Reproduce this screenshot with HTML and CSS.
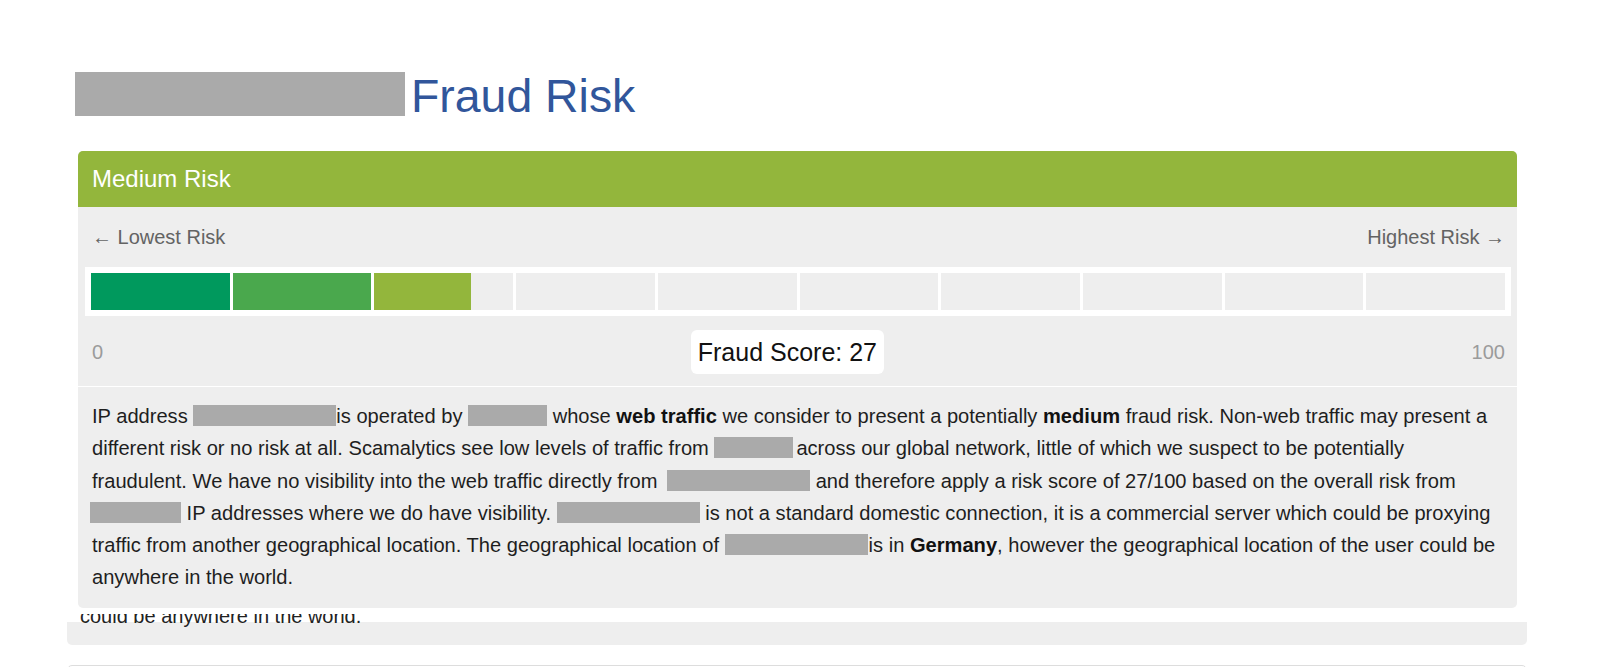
FILE: index.html
```html
<!DOCTYPE html>
<html lang="en">
<head>
<meta charset="utf-8">
<title>Fraud Risk</title>
<link rel="stylesheet" href="styles.css">
</head>
<body>
<div class="page">
  <section class="report">
    <h1 class="title"><span class="redact redact-title"></span>Fraud Risk</h1>
    <div class="panel">
      <div class="panel-head">Medium Risk</div>
      <div class="panel-body">
        <div class="labels">
          <span>&larr; Lowest Risk</span>
          <span>Highest Risk &rarr;</span>
        </div>
        <div class="bar">
          <div class="seg"><div class="fill fill-1" style="width:100%"></div></div>
          <div class="seg"><div class="fill fill-2" style="width:100%"></div></div>
          <div class="seg"><div class="fill fill-3" style="width:70%"></div></div>
          <div class="seg"></div>
          <div class="seg"></div>
          <div class="seg"></div>
          <div class="seg"></div>
          <div class="seg"></div>
          <div class="seg"></div>
          <div class="seg"></div>
        </div>
        <div class="scale">
          <span class="scale-num">0</span>
          <span class="score">Fraud Score: 27</span>
          <span class="scale-num">100</span>
        </div>
      </div>
      <div class="panel-text">
        <p>IP address <span class="redact r-ip"></span>is operated by <span class="redact r-isp"></span> whose <b>web traffic</b> we consider to present a potentially <b>medium</b> fraud risk. Non-web traffic may present a<br>different risk or no risk at all. Scamalytics see low levels of traffic from <span class="redact r-isp r-isp2"></span>across our global network, little of which we suspect to be potentially<br>fraudulent. We have no visibility into the web traffic directly from <span class="redact r-ip r-ip3"></span> and therefore apply a risk score of 27/100 based on the overall risk from<br><span class="redact r-mid"></span> IP addresses where we do have visibility. <span class="redact r-ip"></span> is not a standard domestic connection, it is a commercial server which could be proxying<br>traffic from another geographical location. The geographical location of <span class="redact r-ip r-ip5"></span>is in <b>Germany</b>, however the geographical location of the user could be<br>anywhere in the world.</p>
      </div>
    </div>
  </section>
  <div class="prev-card">
    <p>could be anywhere in the world.</p>
  </div>
  <div class="next-card"></div>
</div>
</body>
</html>
```
FILE: styles.css
```css
* { box-sizing: border-box; }

html, body {
  margin: 0;
  padding: 0;
  background: #ffffff;
}

body {
  font-family: "Liberation Sans", Arial, sans-serif;
  color: #222222;
  overflow: hidden;
}

.page {
  width: 1460px;
  margin-left: 67px;
  padding-top: 69px;
}

.report {
  position: relative;
  z-index: 1;
  background: #ffffff;
  padding-bottom: 6px;
}

.title {
  margin: 0 0 28px 8px;
  font-size: 46.4px;
  line-height: 54px;
  font-weight: normal;
  color: #31569b;
  white-space: nowrap;
}

.redact {
  display: inline-block;
  background: #aaaaaa;
}

.redact-title {
  width: 330px;
  height: 44px;
  vertical-align: -4px;
  margin-right: 6px;
}

.panel {
  margin: 0 10px 0 11px;
  background: #eeeeee;
  border-radius: 5px;
  overflow: hidden;
}

.panel-head {
  height: 56px;
  line-height: 56px;
  padding: 0 14px;
  background: #93b63c;
  color: #ffffff;
  font-size: 24px;
}

.panel-body {
  padding: 18px 6px 12px 7px;
}

.labels {
  display: flex;
  justify-content: space-between;
  padding: 0 6px 0 7px;
  font-size: 20px;
  line-height: 24px;
  color: #636363;
}

.bar {
  display: flex;
  gap: 3px;
  margin-top: 18px;
  padding: 6px;
  background: #ffffff;
}

.seg {
  flex: 1 1 0;
  height: 37px;
  background: #eeeeee;
}

.fill {
  height: 100%;
}

.fill-1 { background: #00995d; }
.fill-2 { background: #4aa84d; }
.fill-3 { background: #93b63c; }

.scale {
  display: flex;
  justify-content: space-between;
  align-items: center;
  margin-top: 14px;
  padding: 0 6px 0 7px;
}

.scale-num {
  font-size: 20px;
  line-height: 24px;
  color: #9b9b9b;
}

.score {
  background: #ffffff;
  border-radius: 6px;
  padding: 7px 7px;
  font-size: 25px;
  line-height: 30px;
  color: #111111;
}

.panel-text {
  border-top: 1px solid #ffffff;
  padding: 13px 14px 14px 14px;
}

.panel-text p {
  margin: 0;
  font-size: 20.1px;
  line-height: 32.3px;
  color: #1e1e1e;
  white-space: nowrap;
}

.panel-text b {
  color: #111111;
}

.r-ip {
  width: 143px;
  height: 21px;
  vertical-align: -3px;
}

.r-ip3 { margin-left: 4px; }
.r-ip5 { margin-right: 1px; }

.r-isp {
  width: 79px;
  height: 21px;
  vertical-align: -3px;
}

.r-isp2 { margin-right: 3px; }

.r-mid {
  width: 91px;
  height: 21px;
  vertical-align: -3px;
  margin-left: -2px;
}

.prev-card {
  display: flow-root;
  height: 31px;
  padding-left: 13px;
  background: linear-gradient(to bottom, transparent 8px, #eeeeee 8px);
  border-radius: 0 0 5px 5px;
}

.prev-card p {
  margin: -14px 0 0 0;
  font-size: 20px;
  line-height: 32px;
  color: #222222;
}

.next-card {
  margin-top: 20px;
  height: 120px;
  border: 1px solid #dddddd;
  border-radius: 5px;
  background: #ffffff;
}
```
